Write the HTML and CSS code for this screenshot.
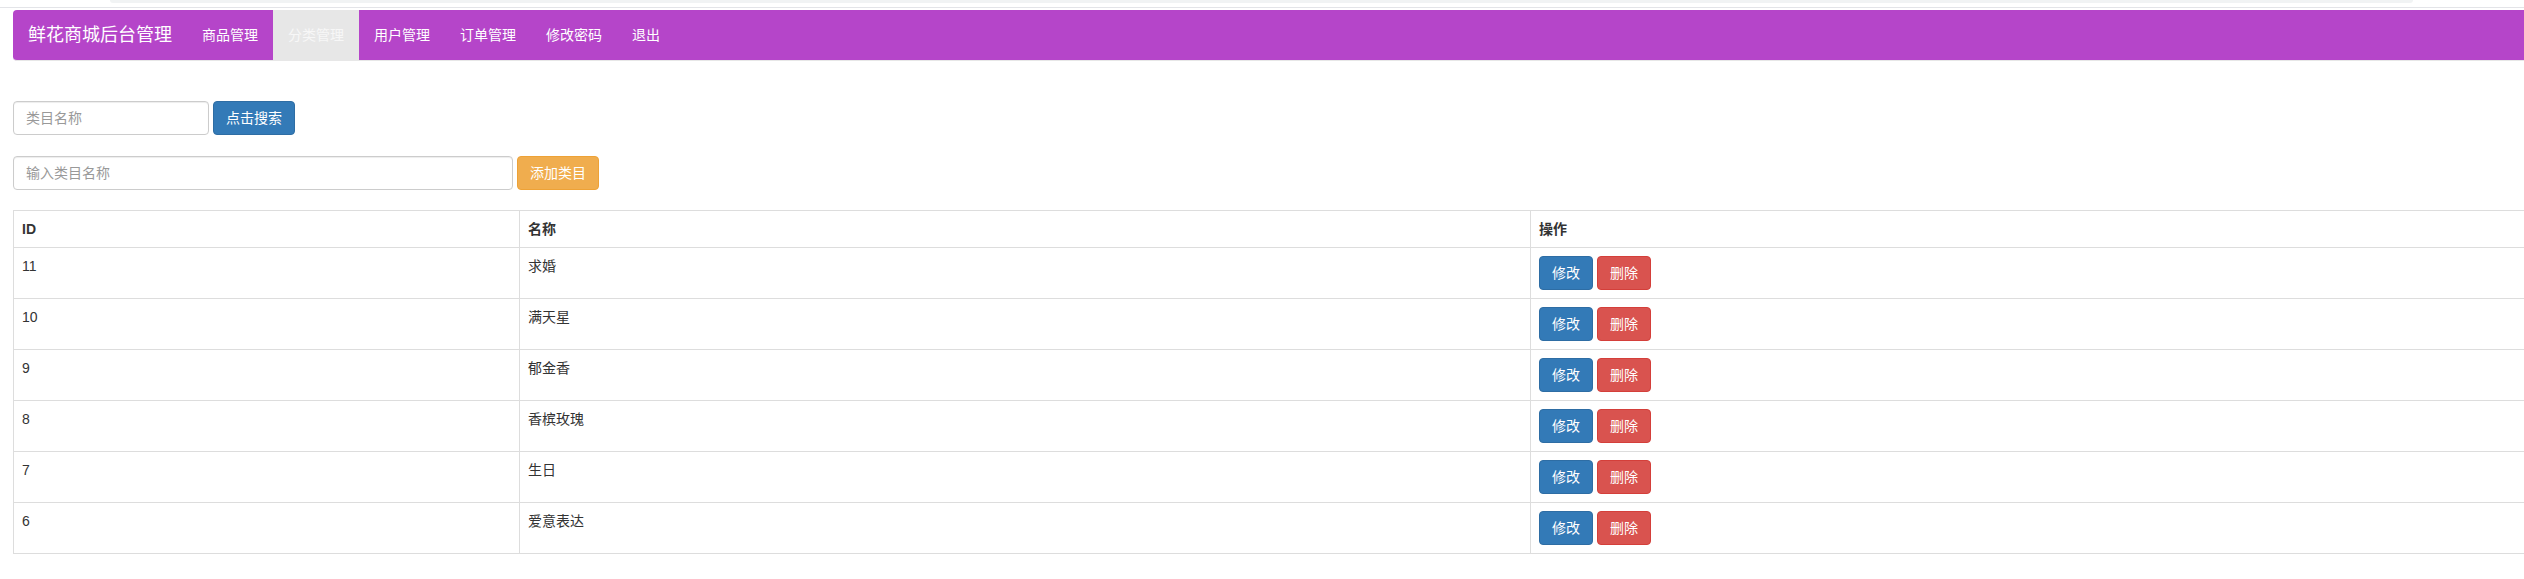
FILE: index.html
```html
<!DOCTYPE html>
<html lang="zh-CN">
<head>
<meta charset="utf-8">
<title>鲜花商城后台管理</title>
<link rel="stylesheet" href="styles.css">
</head>
<body>
<div class="chrome"><div class="chrome-bar"></div></div>
<div class="page">
  <nav class="navbar">
    <a class="brand" href="#">鲜花商城后台管理</a>
    <ul class="nav">
      <li><a href="#">商品管理</a></li>
      <li class="active"><a href="#">分类管理</a></li>
      <li><a href="#">用户管理</a></li>
      <li><a href="#">订单管理</a></li>
      <li><a href="#">修改密码</a></li>
      <li><a href="#">退出</a></li>
    </ul>
  </nav>

  <form class="row-form search-form">
    <input class="input input-search" type="text" placeholder="类目名称">
    <button class="btn btn-primary" type="button">点击搜索</button>
  </form>

  <form class="row-form add-form">
    <input class="input input-add" type="text" placeholder="输入类目名称">
    <button class="btn btn-warning" type="button">添加类目</button>
  </form>

  <table class="table">
    <colgroup>
      <col class="col-id">
      <col class="col-name">
      <col class="col-op">
    </colgroup>
    <thead>
      <tr><th>ID</th><th>名称</th><th>操作</th></tr>
    </thead>
    <tbody>
      <tr><td>11</td><td>求婚</td><td><div class="ops"><button class="btn btn-primary">修改</button><button class="btn btn-danger">删除</button></div></td></tr>
      <tr><td>10</td><td>满天星</td><td><div class="ops"><button class="btn btn-primary">修改</button><button class="btn btn-danger">删除</button></div></td></tr>
      <tr><td>9</td><td>郁金香</td><td><div class="ops"><button class="btn btn-primary">修改</button><button class="btn btn-danger">删除</button></div></td></tr>
      <tr><td>8</td><td>香槟玫瑰</td><td><div class="ops"><button class="btn btn-primary">修改</button><button class="btn btn-danger">删除</button></div></td></tr>
      <tr><td>7</td><td>生日</td><td><div class="ops"><button class="btn btn-primary">修改</button><button class="btn btn-danger">删除</button></div></td></tr>
      <tr><td>6</td><td>爱意表达</td><td><div class="ops"><button class="btn btn-primary">修改</button><button class="btn btn-danger">删除</button></div></td></tr>
    </tbody>
  </table>
</div>
</body>
</html>
```

FILE: styles.css
```css
html, body {
  margin: 0;
  padding: 0;
  overflow: hidden;
  background: #fff;
}
body {
  font-family: "Liberation Sans", "Noto Sans CJK SC", sans-serif;
  font-size: 14px;
  line-height: 20px;
  color: #333;
}
.chrome {
  height: 7px;
  border-bottom: 1px solid #e3e4e8;
  padding: 0 111px 0 110px;
}
.chrome-bar {
  height: 3px;
  background: #f1f3f4;
  border-radius: 0 0 6px 6px;
}
.page {
  padding: 2px 0 0 13px;
  display: flex;
  flex-direction: column;
  align-items: flex-start;
}
.navbar {
  display: flex;
  align-items: stretch;
  width: 2540px;
  height: 50px;
  background: #b545c9;
  border-radius: 4px 0 0 4px;
  border-bottom: 1px solid #e7e7e7;
}
.brand {
  padding: 15px;
  font-size: 18px;
  line-height: 20px;
  color: #fff;
  text-decoration: none;
}
.nav {
  display: flex;
  list-style: none;
  margin: 0;
  padding: 0;
}
.nav a {
  display: block;
  padding: 15px;
  line-height: 20px;
  color: #fff;
  text-decoration: none;
}
.nav .active a {
  background: #e7e7e7;
  color: #f7f7f7;
}
.row-form {
  display: flex;
  gap: 4px;
  margin: 0;
}
.search-form {
  margin-top: 40px;
}
.add-form {
  margin-top: 21px;
}
.input {
  box-sizing: border-box;
  height: 34px;
  padding: 6px 12px;
  font-family: inherit;
  font-size: 14px;
  line-height: 20px;
  color: #555;
  background: #fff;
  border: 1px solid #ccc;
  border-radius: 4px;
  box-shadow: inset 0 1px 1px rgba(0,0,0,.075);
  outline: none;
}
.input::placeholder {
  color: #999;
}
.input-search {
  width: 196px;
}
.input-add {
  width: 500px;
}
.btn {
  box-sizing: border-box;
  height: 34px;
  padding: 6px 12px;
  font-family: inherit;
  font-size: 14px;
  line-height: 20px;
  color: #fff;
  border: 1px solid transparent;
  border-radius: 4px;
  cursor: pointer;
}
.btn-primary {
  background: #337ab7;
  border-color: #2e6da4;
}
.btn-warning {
  background: #f0ad4e;
  border-color: #eea236;
}
.btn-danger {
  background: #d9534f;
  border-color: #d43f3a;
}
.table {
  margin-top: 20px;
  width: 2540px;
  table-layout: fixed;
  border-collapse: collapse;
  border: 1px solid #ddd;
}
.col-id { width: 506px; }
.col-name { width: 1011px; }
.table th,
.table td {
  padding: 8px;
  border: 1px solid #ddd;
  text-align: left;
  vertical-align: top;
  line-height: 20px;
}
.table th {
  font-weight: bold;
}
.ops {
  display: flex;
  gap: 4px;
}
```
